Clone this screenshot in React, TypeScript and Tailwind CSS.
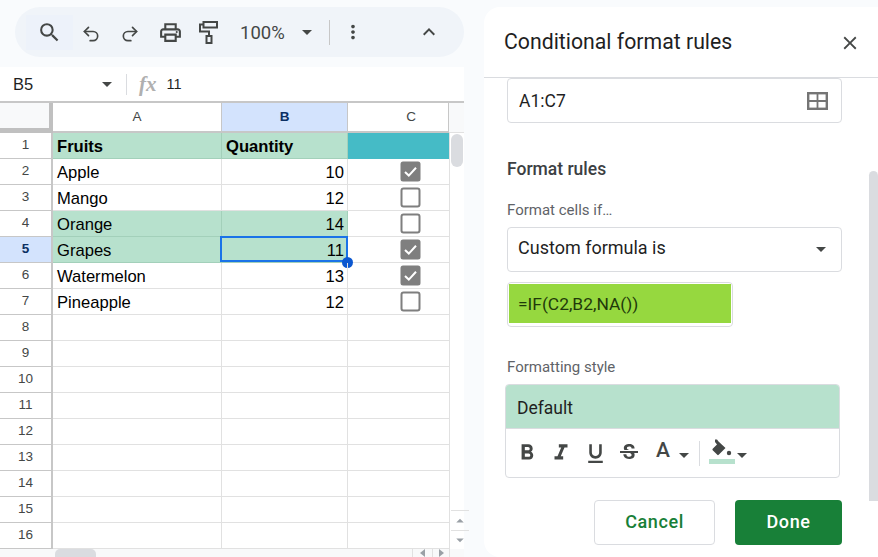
import React from "react";
import { Undo2, Redo2 } from "lucide-react";
import {
  MdSearch, MdOutlinePrint, MdMoreVert, MdExpandLess, MdClose,
  MdFormatBold, MdFormatItalic, MdFormatUnderlined, MdStrikethroughS, MdArrowDropDown,
} from "react-icons/md";

const GREEN = "bg-[#b7e1cd]";

function Caret({ className = "" }: { className?: string }) {
  return <span className={`block h-0 w-0 border-x-[5.5px] border-t-[5.5px] border-x-transparent border-t-[#444746] ${className}`} />;
}

function Check({ on }: { on: boolean }) {
  if (on)
    return (
      <svg width="21" height="21" viewBox="0 0 21 21">
        <rect x="0.5" y="0.5" width="20" height="20" rx="2.5" fill="#7f7f7f" />
        <path d="M5 11l3.8 3.6L16 6.8" fill="none" stroke="#fff" strokeWidth="2" />
      </svg>
    );
  return (
    <svg width="21" height="21" viewBox="0 0 21 21">
      <rect x="1.5" y="1.5" width="18" height="18" rx="2" fill="#fff" stroke="#7f7f7f" strokeWidth="2" />
    </svg>
  );
}

const rows: { a: string; b: string; c?: boolean; tint?: boolean; head?: boolean }[] = [
  { a: "Fruits", b: "Quantity", tint: true, head: true },
  { a: "Apple", b: "10", c: true },
  { a: "Mango", b: "12", c: false },
  { a: "Orange", b: "14", c: false, tint: true },
  { a: "Grapes", b: "11", c: true, tint: true },
  { a: "Watermelon", b: "13", c: true },
  { a: "Pineapple", b: "12", c: false },
];

function Row({ n }: { n: number }) {
  const r = rows[n - 1];
  const sel = n === 5;
  const line = r?.tint ? "border-[#a3d0ba]" : "border-[#e1e1e1]";
  return (
    <div className="flex h-[26px]">
      <div className={`flex w-[53px] shrink-0 items-center justify-center border-r-2 border-b border-r-[#c7c7c7] border-b-[#c7c7c7] text-[13.5px] ${sel ? "bg-[#d3e3fd] font-bold text-[#0b2f63]" : "bg-white text-[#444746]"}`}>
        {n}
      </div>
      <div className={`flex w-[169px] shrink-0 items-center border-r border-b pt-[4px] pl-[4px] text-[16.6px] text-black ${line} ${r?.tint ? GREEN : ""} ${r?.head ? "font-bold" : ""}`}>
        {r?.a}
      </div>
      <div className={`relative flex w-[126px] shrink-0 items-center border-r border-b pt-[4px] text-[16.6px] text-black ${line} ${r?.tint ? GREEN : ""} ${r?.head ? "justify-start pl-[4px] font-bold" : "justify-end pr-[3px]"}`}>
        {r?.b}
        {sel && (
          <>
            <span className="absolute -top-px -left-[2px] h-[26px] w-[128px] border-2 border-[#1a73e8]" />
            <span className="absolute -right-[6px] -bottom-[6px] h-[11px] w-[11px] rounded-full bg-[#0b57d0]" />
          </>
        )}
      </div>
      <div className={`flex w-[101px] shrink-0 items-center justify-center border-b pl-[24px] ${r?.head ? "border-[#45bbc6] bg-[#45bbc6]" : "border-[#e1e1e1]"}`}>
        {r && !r.head && <Check on={!!r.c} />}
      </div>
    </div>
  );
}

export default function App() {
  return (
    <div className="flex h-[557px] w-[878px] overflow-hidden bg-[#f9fbfd] font-['Liberation_Sans',sans-serif]">
      {/* left side */}
      <div className="flex w-[464px] shrink-0 flex-col pt-[7px]">
        <div className="ml-[15px] flex h-[50px] w-[449px] items-center rounded-[25px] bg-[#f0f4f9] pl-[11px] text-[#444746]">
          <div className="flex h-[35px] w-[47px] items-center justify-center bg-[#edf2fa]">
            <MdSearch size={25} />
          </div>
          <div className="flex w-[36px] justify-center pt-[3px]"><Undo2 size={20} strokeWidth={2} /></div>
          <div className="flex w-[42px] justify-center pt-[3px]"><Redo2 size={20} strokeWidth={2} /></div>
          <div className="flex w-[38px] justify-center"><MdOutlinePrint size={25} /></div>
          <div className="flex w-[38px] justify-center">
            <svg width="19" height="23" viewBox="0 0 19 23" fill="none" stroke="#444746" strokeWidth="2">
              <rect x="4.5" y="1" width="13.5" height="5.5" />
              <path d="M4.5 3.5H1V10.5H10V15" />
              <rect x="7.5" y="15" width="5" height="7" />
            </svg>
          </div>
          <span className="mt-[3px] ml-[13px] w-[46px] font-['Roboto',sans-serif] text-[18.5px] text-[#444746]">100%</span>
          <Caret className="ml-[16px]" />
          <div className="ml-[17px] h-[25px] w-px bg-[#c7c7c7]" />
          <div className="ml-[11px] flex w-[24px] justify-center"><MdMoreVert size={22} /></div>
          <div className="ml-[52px] flex w-[24px] justify-center"><MdExpandLess size={26} /></div>
        </div>

        <div className="mt-[10px] flex flex-1 flex-col bg-white">
          <div className="flex h-[36px] items-center border-b-2 border-[#c7c7c7] pt-[1px]">
            <span className="ml-[13px] w-[87px] text-[16.5px] text-[#1f1f1f]">B5</span>
            <Caret className="ml-[2px]" />
            <div className="ml-[14px] h-[21px] w-px bg-[#dadce0]" />
            <span className="ml-[12px] font-['Liberation_Serif',serif] text-[21px] font-bold text-[#b0b0b0] italic">fx</span>
            <span className="ml-[10px] text-[14.5px] text-[#1f1f1f]">11</span>
          </div>

          <div className="flex h-[30px] text-[13.5px] text-[#444746]">
            <div className="h-full w-[53px] border-r-[4px] border-b-[5px] border-[#c0c0c0] bg-[#f8f9fa]" />
            <div className="flex w-[169px] items-center justify-center border-r border-b-2 border-[#c7c7c7]">A</div>
            <div className="flex w-[126px] items-center justify-center border-r border-b-2 border-[#c7c7c7] bg-[#d3e3fd] font-bold text-[#0b2f63]">B</div>
            <div className="flex w-[101px] items-center justify-center border-r border-b-2 border-[#c7c7c7] pl-[26px]">C</div>
            <div className="flex-1 border-b border-[#e1e1e1] bg-[#f8f9fa]" />
          </div>

          <div className="flex">
            <div className="w-[449px] shrink-0">
              {Array.from({ length: 16 }, (_, i) => <Row key={i} n={i + 1} />)}
            </div>
            <div className="flex flex-1 flex-col border-l border-[#e1e1e1] pl-[1px]">
              <div className="mt-[1px] h-[33px] w-[12px] rounded-[6px] bg-[#dadce0]" />
              <div className="flex-1" />
              <div className="flex h-[20px] items-center justify-center border-t border-[#e1e1e1]"><MdArrowDropDown size={18} className="rotate-180 text-[#9aa0a6]" /></div>
              <div className="flex h-[19px] items-center justify-center border-t border-[#e1e1e1]"><MdArrowDropDown size={18} className="text-[#9aa0a6]" /></div>
            </div>
          </div>

          <div className="flex h-[8px] overflow-hidden bg-[#f8f9fa]">
            <div className="ml-[55px] h-[10px] w-[41px] rounded-t-[5px] bg-[#dadce0]" />
            <div className="ml-[316px] flex h-full w-[20px] items-end justify-center border-l border-[#e1e1e1]">
              <span className="block h-0 w-0 border-y-[4px] border-r-[5px] border-y-transparent border-r-[#9aa0a6]" />
            </div>
            <div className="flex h-full w-[18px] items-end justify-center border-x border-[#e1e1e1]">
              <span className="block h-0 w-0 border-y-[4px] border-l-[5px] border-y-transparent border-l-[#9aa0a6]" />
            </div>
          </div>
        </div>
      </div>

      {/* side panel */}
      <div className="mt-[7px] ml-[20px] flex h-[550px] w-[394px] shrink-0 flex-col rounded-l-[16px] bg-white font-['Roboto',sans-serif]">
        <div className="flex h-[71px] shrink-0 items-center justify-between border-b border-[#dadce0] pr-[17px] pl-[20px]">
          <span className="text-[21.25px] text-[#1f1f1f]">Conditional format rules</span>
          <MdClose size={22} className="mt-[2px] text-[#444746]" />
        </div>

        <div className="flex flex-1">
          <div className="w-[385px] shrink-0 pl-[23px]">
            <div className="flex h-[45px] w-[335px] items-center justify-between rounded-[4px] border border-[#dadce0] pt-[1px] pr-[13px] pl-[11px] text-[17.5px] text-[#1f1f1f]">
              A1:C7
              <svg width="21" height="18" viewBox="0 0 21 18" fill="none" stroke="#757575" strokeWidth="2.4">
                <rect x="1.2" y="1.2" width="18.6" height="15.6" />
                <path d="M10.5 1v16M1 9h19" strokeWidth="1.8" />
              </svg>
            </div>

            <div className="mt-[34px] text-[17.5px] leading-[24px] font-medium text-[#3c4043]">Format rules</div>
            <div className="mt-[19px] text-[15px] leading-[20px] text-[#5f6368]">Format cells if…</div>

            <div className="mt-[7px] flex h-[45px] w-[335px] items-center justify-between rounded-[4px] border border-[#dadce0] pr-[15px] pl-[10px] text-[18px] text-[#1f1f1f]">
              <span className="-mt-[4px]">Custom formula is</span>
              <Caret />
            </div>

            <div className="mt-[10px] flex h-[45px] w-[226px] rounded-[4px] border border-[#dadce0] pt-[1px] pr-[1px] pb-[3px] pl-[1px]">
              <div className="flex flex-1 items-center bg-[#96d83f] pt-[2px] pl-[9px] text-[17.4px] text-[#1f3a0a]">=IF(C2,B2,NA())</div>
            </div>

            <div className="mt-[30px] text-[15px] leading-[20px] text-[#5f6368]">Formatting style</div>

            <div className="mt-[7px] -ml-[2px] w-[335px] overflow-hidden rounded-[4px] border border-[#dadce0]">
              <div className={`flex h-[44px] items-center border-b border-[#dadce0] pt-[3px] pl-[11px] text-[17.5px] text-[#1f1f1f] ${GREEN}`}>Default</div>
              <div className="flex h-[48px] items-center pl-[8px] text-[#444746]">
                <MdFormatBold size={26} />
                <MdFormatItalic size={26} className="ml-[8px]" />
                <MdFormatUnderlined size={25} className="ml-[9px]" />
                <MdStrikethroughS size={24} className="ml-[9px]" />
                <span className="mb-[5px] ml-[15px] text-[21px] leading-none font-medium">A</span>
                <Caret className="mt-[5px] ml-[9px]" />
                <div className="ml-[10px] h-[25px] w-px bg-[#dadce0]" />
                <div className="ml-[9px] flex w-[26px] flex-col items-center">
                  <svg width="20" height="18" viewBox="0 0 20 18" className="-mt-[3px]" fill="#444746">
                    <path d="M3 0.5l2 0 1.5 2 7 6.5-6.8 6.8a1 1 0 0 1-1.4 0L0.7 11.2a1 1 0 0 1 0-1.4L5 5.5 3 3z" />
                    <circle cx="17" cy="14" r="2.2" />
                  </svg>
                  <span className="mt-[2px] block h-[5px] w-[26px] bg-[#b7e1cd]" />
                </div>
                <Caret className="mt-[4px] ml-[2px]" />
              </div>
            </div>

            <div className="mt-[22px] flex w-[335px] justify-end gap-[20px]">
              <div className="flex h-[45px] w-[121px] items-center justify-center rounded-[4px] border border-[#dadce0] pb-[2px] text-[18px] font-medium tracking-[0.6px] text-[#188038]">Cancel</div>
              <div className="flex h-[45px] w-[107px] items-center justify-center rounded-[4px] bg-[#188038] pb-[2px] text-[18px] font-medium tracking-[0.6px] text-white">Done</div>
            </div>
          </div>
          <div className="mt-[93px] h-[330px] w-[9px] rounded-t-[5px] bg-[#dadce0]" />
        </div>
      </div>
    </div>
  );
}
